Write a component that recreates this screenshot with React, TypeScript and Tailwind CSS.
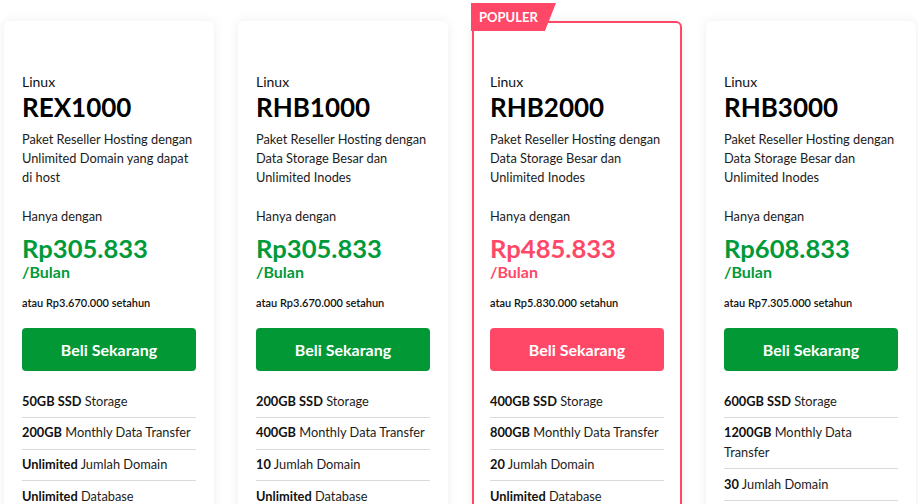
type Feature = { strong: string; text: string };

interface Plan {
  name: string;
  desc: string;
  price: string;
  yearly: string;
  popular?: boolean;
  features: Feature[];
}

const plans: Plan[] = [
  {
    name: 'REX1000',
    desc: 'Paket Reseller Hosting dengan Unlimited Domain yang dapat di host',
    price: 'Rp305.833',
    yearly: 'atau Rp3.670.000 setahun',
    features: [
      { strong: '50GB SSD', text: 'Storage' },
      { strong: '200GB', text: 'Monthly Data Transfer' },
      { strong: 'Unlimited', text: 'Jumlah Domain' },
      { strong: 'Unlimited', text: 'Database' },
    ],
  },
  {
    name: 'RHB1000',
    desc: 'Paket Reseller Hosting dengan Data Storage Besar dan Unlimited Inodes',
    price: 'Rp305.833',
    yearly: 'atau Rp3.670.000 setahun',
    features: [
      { strong: '200GB SSD', text: 'Storage' },
      { strong: '400GB', text: 'Monthly Data Transfer' },
      { strong: '10', text: 'Jumlah Domain' },
      { strong: 'Unlimited', text: 'Database' },
    ],
  },
  {
    name: 'RHB2000',
    desc: 'Paket Reseller Hosting dengan Data Storage Besar dan Unlimited Inodes',
    price: 'Rp485.833',
    yearly: 'atau Rp5.830.000 setahun',
    popular: true,
    features: [
      { strong: '400GB SSD', text: 'Storage' },
      { strong: '800GB', text: 'Monthly Data Transfer' },
      { strong: '20', text: 'Jumlah Domain' },
      { strong: 'Unlimited', text: 'Database' },
    ],
  },
  {
    name: 'RHB3000',
    desc: 'Paket Reseller Hosting dengan Data Storage Besar dan Unlimited Inodes',
    price: 'Rp608.833',
    yearly: 'atau Rp7.305.000 setahun',
    features: [
      { strong: '600GB SSD', text: 'Storage' },
      { strong: '1200GB', text: 'Monthly Data Transfer' },
      { strong: '30', text: 'Jumlah Domain' },
      { strong: 'Unlimited', text: 'Database' },
    ],
  },
];

function PlanCard({ plan }: { plan: Plan }) {
  const accent = plan.popular ? 'text-[#ff4867]' : 'text-[#009a3a]';
  return (
    <div
      className={`relative w-[210px] shrink-0 rounded-[6px] border-2 bg-white px-4 pt-[49px] pb-6 shadow-[0_0_12px_rgba(0,0,0,0.07)] ${
        plan.popular ? 'border-[#ff4867]' : 'border-white'
      }`}
    >
      {plan.popular && (
        <div className="absolute -left-[3px] -top-[20px] h-[28px] w-[85px] bg-[#ff4867] pl-[8px] text-[13px] font-bold leading-[28px] text-white [clip-path:polygon(0_0,100%_0,87%_100%,0_100%)]">
          POPULER
        </div>
      )}
      <div className="text-[14px] leading-[20px] text-[#111]">Linux</div>
      <div className="text-[26px] font-bold leading-[30px] text-black">{plan.name}</div>
      <p className="mt-[8px] text-[12.8px] leading-[19px] text-[#1c1c1c]">{plan.desc}</p>
      <div className="mt-[20px] text-[12.8px] leading-[19px] text-[#1c1c1c]">Hanya dengan</div>
      <div className={`mt-[7px] text-[25.6px] font-bold leading-[30px] ${accent}`}>{plan.price}</div>
      <div className={`text-[16px] font-bold leading-[18px] ${accent}`}>/Bulan</div>
      <div className="mt-[14px] text-[11px] font-semibold leading-[16px] text-[#111]">{plan.yearly}</div>
      <button
        className={`mt-[17px] h-[43px] w-full rounded-[4px] pt-[1px] text-[16px] font-bold text-white ${
          plan.popular ? 'bg-[#ff4867]' : 'bg-[#039836]'
        }`}
      >
        Beli Sekarang
      </button>
      <ul className="mt-[15px]">
        {plan.features.map((f, i) => (
          <li
            key={i}
            className="border-b border-[#dadada] py-[5.65px] text-[12.8px] leading-[19.5px] text-[#1c1c1c]"
          >
            <span className="font-bold text-[#111]">{f.strong}</span> {f.text}
          </li>
        ))}
      </ul>
    </div>
  );
}

export default function App() {
  return (
    <div className="h-[504px] w-[918px] overflow-hidden bg-white font-['Lato','Liberation_Sans',sans-serif]">
      <div className="flex gap-6 pl-[4px] pt-[21px]">
        {plans.map((p) => (
          <PlanCard key={p.name} plan={p} />
        ))}
      </div>
    </div>
  );
}
